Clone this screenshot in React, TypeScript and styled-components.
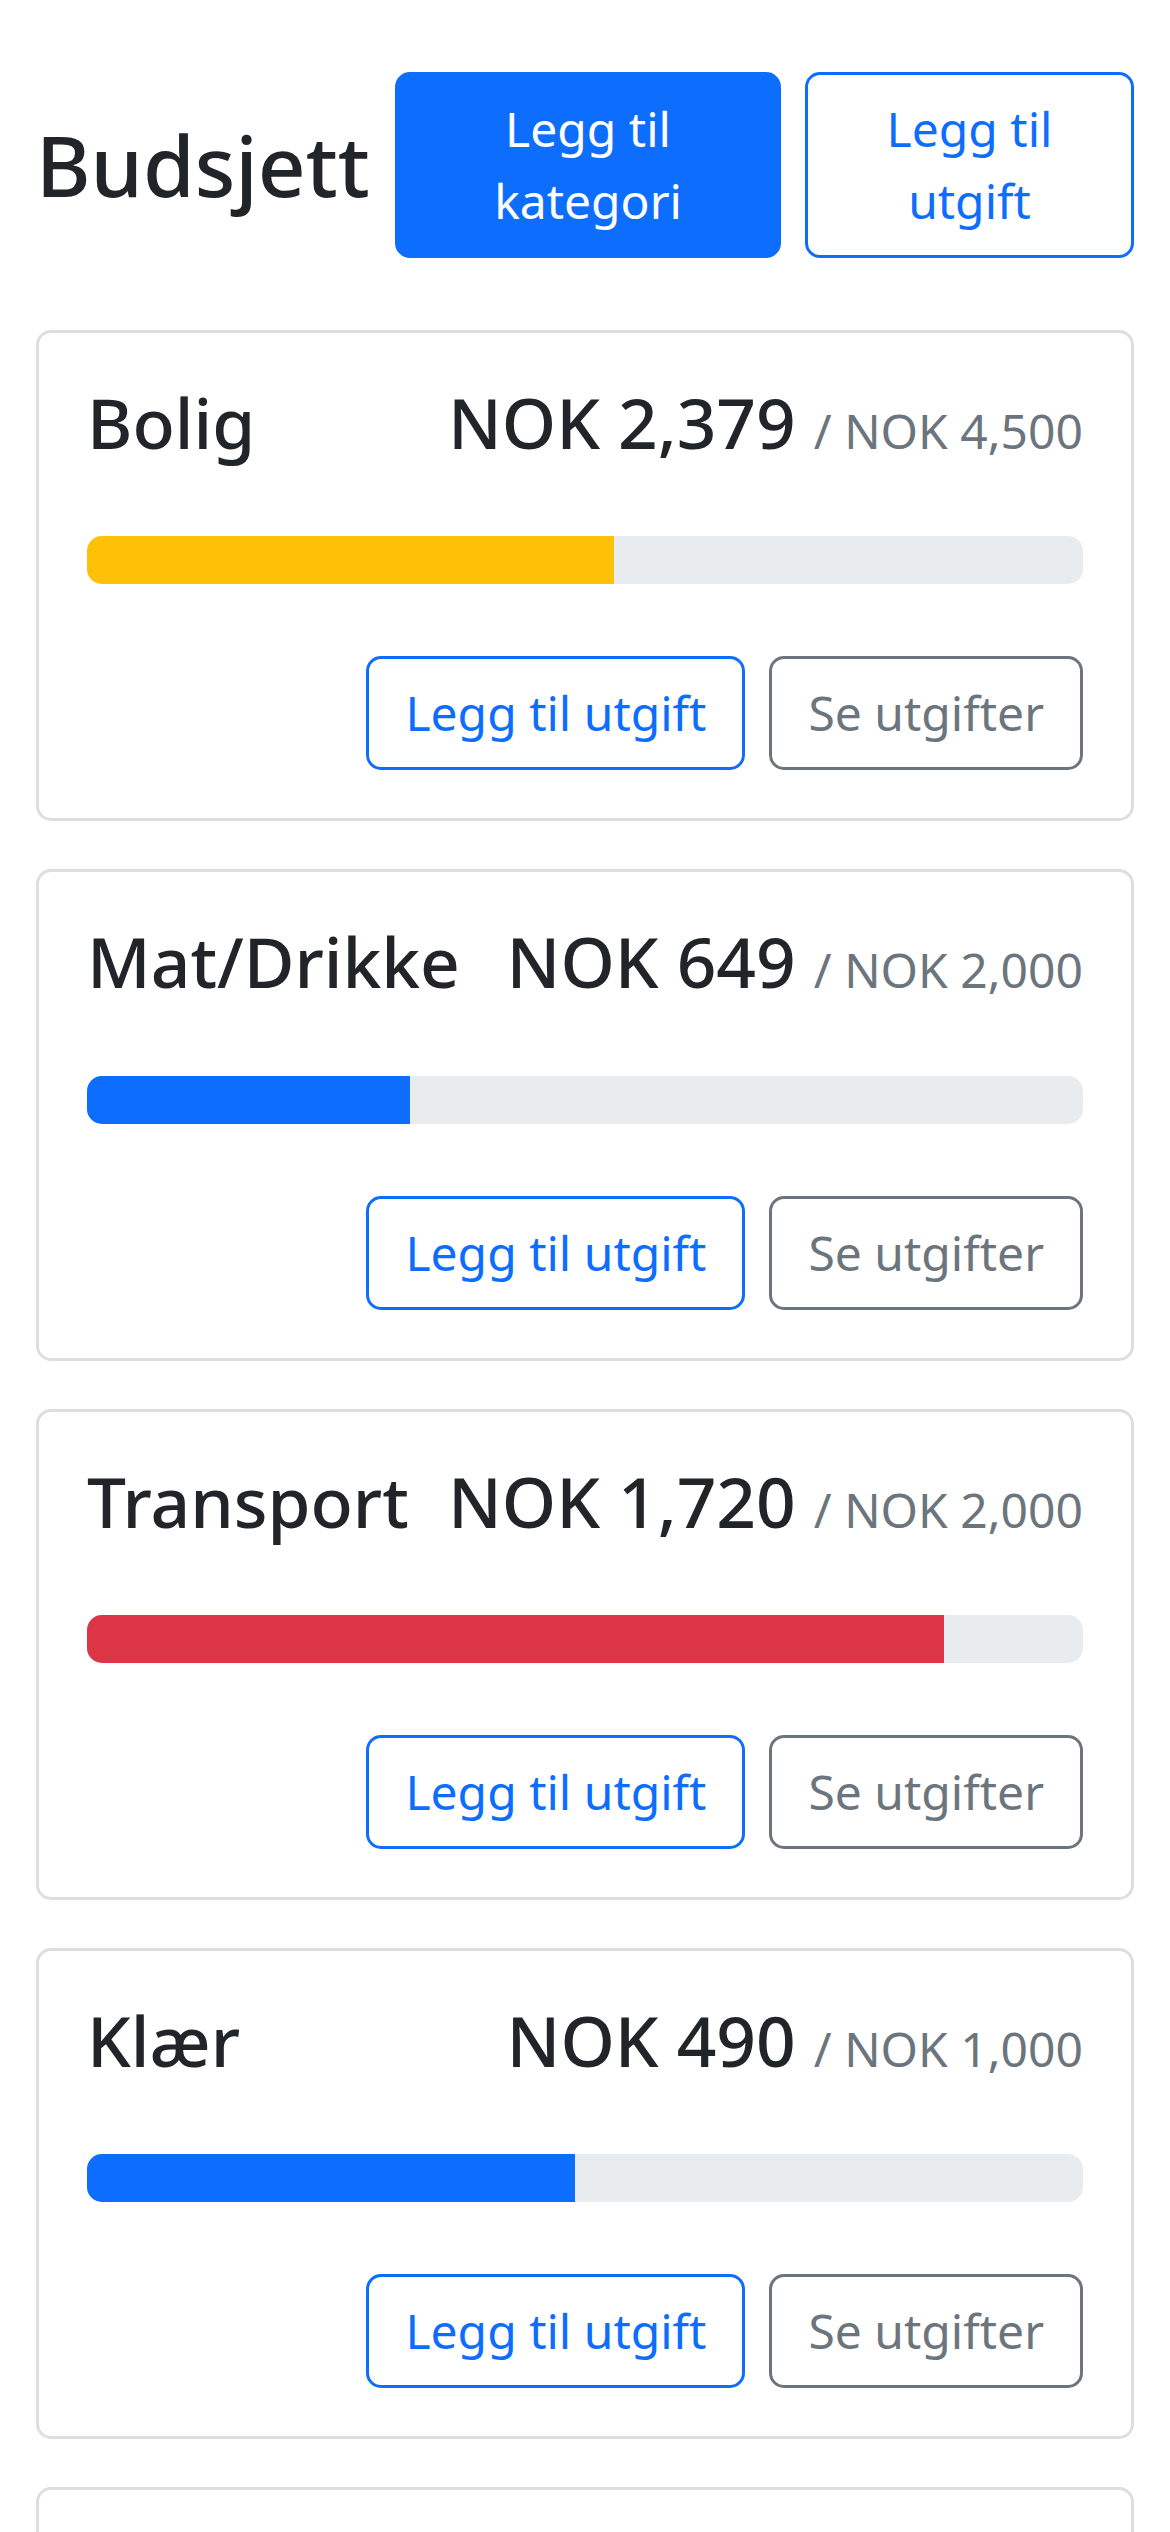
import React from "react";
import styled, { createGlobalStyle, css } from "styled-components";

// global
const GlobalStyle = createGlobalStyle`
    html, body {
        margin: 0;
        padding: 0;
        background: #ffffff;
    }

    body {
        font-family: "Noto Sans", "Liberation Sans", sans-serif;
        font-size: 48px;
        line-height: 1.5;
        color: #212529;
    }

    * {
        box-sizing: border-box;
    }
`;

type Tone = "primary" | "secondary";

const toneColors: Record<Tone, string> = {
    primary: "#0d6efd",
    secondary: "#6c757d",
};

// layout
const Page = styled.main`
    padding: 72px 36px 48px;
`;

const Header = styled.header`
    display: flex;
    align-items: center;
    justify-content: space-between;
    margin-bottom: 72px;
`;

const PageTitle = styled.h1`
    margin: 0;
    font-size: 83.5px;
    font-weight: 500;
    line-height: 1.2;
`;

const HeaderActions = styled.div`
    display: flex;
    gap: 24px;
`;

// buttons
const Button = styled.button<{ $tone: Tone; $solid?: boolean; $width?: number }>`
    display: inline-block;
    padding: 18px 36px;
    border: 3px solid ${({ $tone }) => toneColors[$tone]};
    border-radius: 15px;
    font-family: inherit;
    font-size: 48px;
    line-height: 1.5;
    font-weight: 400;
    text-align: center;
    cursor: pointer;

    ${({ $solid, $tone }) =>
        $solid
            ? css`
                  background: ${toneColors[$tone]};
                  color: #ffffff;
              `
            : css`
                  background: transparent;
                  color: ${toneColors[$tone]};
              `}

    ${({ $width }) => ($width ? `width: ${$width}px; flex: 0 0 ${$width}px;` : "white-space: nowrap;")}
`;

// card
const CardList = styled.div`
    display: flex;
    flex-direction: column;
    gap: 48px;
`;

const Card = styled.section`
    border: 3px solid #dedede;
    border-radius: 15px;
    background: #ffffff;
    padding: 48px;
`;

const CardHead = styled.div`
    display: flex;
    align-items: baseline;
    justify-content: space-between;
    gap: 24px;
    margin-bottom: 72px;
`;

const CardTitle = styled.h3`
    margin: 0;
    font-size: 69.4px;
    font-weight: 500;
    line-height: 1.2;
    white-space: nowrap;
`;

const Amount = styled.div`
    font-size: 69.4px;
    font-weight: 500;
    line-height: 1.2;
    white-space: nowrap;
`;

const Limit = styled.span`
    font-size: 48px;
    font-weight: 400;
    color: #6c757d;
`;

const Track = styled.div`
    display: flex;
    height: 48px;
    border-radius: 15px;
    overflow: hidden;
    background: #e9ecef;
    margin-bottom: 72px;
`;

const Fill = styled.div<{ $color: string }>`
    height: 100%;
    background: ${({ $color }) => $color};
`;

const CardActions = styled.div`
    display: flex;
    justify-content: flex-end;
    gap: 24px;
`;

type Category = {
    name: string;
    spent: number;
    limit: number;
};

const categories: Category[] = [
    { name: "Bolig", spent: 2379, limit: 4500 },
    { name: "Mat/Drikke", spent: 649, limit: 2000 },
    { name: "Transport", spent: 1720, limit: 2000 },
    { name: "Klær", spent: 490, limit: 1000 },
    { name: "Annet", spent: 120, limit: 500 },
];

const fmt = (n: number) => n.toLocaleString("en-US");

const barColor = (ratio: number) => {
    if (ratio >= 0.75) return "#dc3545";
    if (ratio >= 0.5) return "#ffc107";
    return "#0d6efd";
};

const BudgetCard = ({ name, spent, limit }: Category) => {
    const ratio = spent / limit;

    return (
        <Card>
            <CardHead>
                <CardTitle>{name}</CardTitle>
                <Amount>
                    {`NOK ${fmt(spent)} `}
                    <Limit>/ NOK {fmt(limit)}</Limit>
                </Amount>
            </CardHead>
            <Track>
                <Fill $color={barColor(ratio)} style={{ width: `${Math.min(ratio, 1) * 100}%` }} />
            </Track>
            <CardActions>
                <Button $tone="primary">Legg til utgift</Button>
                <Button $tone="secondary">Se utgifter</Button>
            </CardActions>
        </Card>
    );
};

export default function App() {
    return (
        <>
            <GlobalStyle />
            <Page>
                <Header>
                    <PageTitle>Budsjett</PageTitle>
                    <HeaderActions>
                        <Button $tone="primary" $solid $width={386}>
                            Legg til kategori
                        </Button>
                        <Button $tone="primary" $width={329}>
                            Legg til utgift
                        </Button>
                    </HeaderActions>
                </Header>
                <CardList>
                    {categories.map((c) => (
                        <BudgetCard key={c.name} {...c} />
                    ))}
                </CardList>
            </Page>
        </>
    );
}
